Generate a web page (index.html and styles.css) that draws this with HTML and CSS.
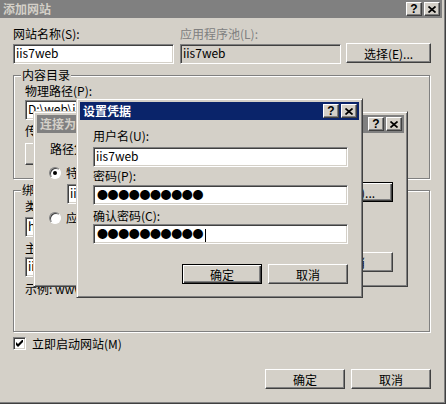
FILE: index.html
```html
<!DOCTYPE html>
<html lang="zh-CN">
<head>
    <meta charset="UTF-8">
    <title>添加网站</title>
    <link rel="stylesheet" href="styles.css">
</head>
<body>
    <div class="window main-win">
        <div class="titlebar">
            <span class="title">添加网站</span>
            <span class="title-btns">
                <span class="title-btn">?</span>
                <span class="title-btn"><svg width="8" height="7" viewBox="0 0 8 7"><path d="M0.5 0.5L7.5 6.5M7.5 0.5L0.5 6.5" stroke="#000" stroke-width="1.7"/></svg></span>
            </span>
        </div>
        <div class="main-body">
            <div class="site-grid">
                <div class="lbl">网站名称(S):</div>
                <div class="lbl disabled">应用程序池(L):</div>
                <div></div>
                <div class="field">iis7web</div>
                <div class="field readonly">iis7web</div>
                <button class="btn select-btn">选择(E)...</button>
            </div>
            <fieldset class="group dir-group">
                <legend>内容目录</legend>
                <div class="lbl">物理路径(P):</div>
                <div class="path-row">
                    <div class="field path-field">D:\web\iis7web</div>
                    <button class="btn browse-btn">...</button>
                </div>
                <div class="lbl pass-lbl">传递身份验证</div>
                <div class="auth-btns">
                    <button class="btn tall">连接为(C)...</button>
                    <button class="btn tall">测试设置(G)...</button>
                </div>
            </fieldset>
            <fieldset class="group bind-group">
                <legend>绑定</legend>
                <div class="bind-grid">
                    <div class="lbl">类型(T):</div>
                    <div class="lbl">IP 地址(I):</div>
                    <div class="lbl">端口(O):</div>
                    <div class="field">http</div>
                    <div class="field">全部未分配</div>
                    <div class="field">80</div>
                </div>
                <div class="lbl host-lbl">主机名(H):</div>
                <div class="field host-field">iis7web</div>
                <div class="lbl example">示例: www.contoso.com 或 marketing.contoso.com</div>
            </fieldset>
            <label class="check-row">
                <span class="checkbox"><svg width="7" height="7" viewBox="0 0 7 7"><path d="M0 2L2 4L7 -1V2L2 7L0 5Z" fill="#000"/></svg></span>
                立即启动网站(M)
            </label>
            <div class="btn-row main-btns">
                <button class="btn">确定</button>
                <button class="btn">取消</button>
            </div>
        </div>
    </div>

    <div class="window connect-win">
        <div class="titlebar">
            <span class="title">连接为</span>
            <span class="title-btns">
                <span class="title-btn">?</span>
                <span class="title-btn"><svg width="8" height="7" viewBox="0 0 8 7"><path d="M0.5 0.5L7.5 6.5M7.5 0.5L0.5 6.5" stroke="#000" stroke-width="1.7"/></svg></span>
            </span>
        </div>
        <div class="connect-body">
            <div class="lbl">路径凭据:</div>
            <label class="radio-row first"><span class="radio checked"></span>特定用户(S):</label>
            <div class="user-row">
                <div class="field user-field">iis7web</div>
                <button class="btn default set-btn">设置(E)...</button>
            </div>
            <label class="radio-row second"><span class="radio"></span>应用程序用户(通过身份验证)(A)</label>
            <div class="btn-row connect-btns">
                <button class="btn">确定</button>
                <button class="btn">取消</button>
            </div>
        </div>
    </div>

    <div class="window creds-win">
        <div class="titlebar active">
            <span class="title">设置凭据</span>
            <span class="title-btns">
                <span class="title-btn">?</span>
                <span class="title-btn"><svg width="8" height="7" viewBox="0 0 8 7"><path d="M0.5 0.5L7.5 6.5M7.5 0.5L0.5 6.5" stroke="#000" stroke-width="1.7"/></svg></span>
            </span>
        </div>
        <div class="creds-body">
            <div class="lbl">用户名(U):</div>
            <div class="field wide user-name">iis7web</div>
            <div class="lbl pw-lbl">密码(P):</div>
            <div class="field wide dots">●●●●●●●●●●</div>
            <div class="lbl confirm-lbl">确认密码(C):</div>
            <div class="field wide dots confirm">●●●●●●●●●●<span class="caret"></span></div>
            <div class="btn-row creds-btns">
                <button class="btn default">确定</button>
                <button class="btn">取消</button>
            </div>
        </div>
    </div>
</body>
</html>
```

FILE: styles.css
```css
* {
    box-sizing: border-box;
}
body {
    margin: 0;
    width: 447px;
    height: 404px;
    overflow: hidden;
    position: relative;
    background: #fff;
    font-family: "Noto Sans CJK SC", "Liberation Sans", sans-serif;
    font-size: 12px;
    color: #000;
}

/* windows */
.window {
    position: absolute;
    display: flex;
    flex-direction: column;
    padding: 3px;
    background: #d4d0c8;
    border: 1px solid;
    border-color: #d4d0c8 #404040 #404040 #d4d0c8;
    box-shadow: inset 1px 1px #fff, inset -1px -1px #808080;
}
.main-win { left: -4px; top: -4px; width: 450px; height: 408px; }
.connect-win { left: 33px; top: 111px; width: 375px; height: 176px; }
.creds-win { left: 76px; top: 98px; width: 287px; height: 200px; }

.titlebar {
    display: flex;
    align-items: center;
    height: 18px;
    padding-left: 3px;
    background: #808080;
    color: #d4d0c8;
    font-weight: bold;
    line-height: 18px;
}
.titlebar.active {
    background: #0a246a;
    color: #fff;
}
.title-btns {
    display: flex;
    gap: 2px;
    margin-left: auto;
    margin-right: 2px;
}
.title-btn {
    display: flex;
    align-items: center;
    justify-content: center;
    width: 16px;
    height: 14px;
    background: #d4d0c8;
    border: 1px solid;
    border-color: #fff #404040 #404040 #fff;
    box-shadow: inset -1px -1px #808080;
    color: #000;
    font-family: "Liberation Sans", sans-serif;
    font-size: 12px;
    font-weight: bold;
    line-height: 12px;
}

/* controls */
.lbl {
    line-height: 14px;
    height: 14px;
    white-space: nowrap;
}
.lbl.disabled { color: #808080; }
.field {
    height: 20px;
    padding: 0 2px;
    line-height: 16px;
    background: #fff;
    border: 1px solid;
    border-color: #808080 #fff #fff #808080;
    box-shadow: inset 1px 1px #404040, inset -1px -1px #d4d0c8;
    white-space: nowrap;
    overflow: hidden;
}
.field.readonly { background: #d4d0c8; }
.btn {
    height: 20px;
    padding: 0;
    font: inherit;
    color: #000;
    background: #d4d0c8;
    border: 1px solid;
    border-color: #fff #404040 #404040 #fff;
    box-shadow: inset -1px -1px #808080;
    white-space: nowrap;
}
.btn.default {
    border-color: #000;
    box-shadow: inset 1px 1px #fff, inset -1px -1px #404040, inset -2px -2px #808080;
}
.btn.tall { height: 22px; }
.btn-row {
    display: flex;
    justify-content: flex-end;
    gap: 6px;
}
.btn-row .btn { width: 80px; }

/* main window */
.main-body {
    padding: 9px 12px 0 13px;
}
.site-grid {
    display: grid;
    grid-template-columns: 162px 161px 85px;
    column-gap: 5px;
    row-gap: 3px;
}
.site-grid .field { width: 161px; }
.select-btn { margin-top: -1px; }

.group {
    margin: 4px 0 0;
    padding: 2px 11px 0;
    min-width: 0;
    border: 1px solid #808080;
    box-shadow: inset 1px 1px #fff, 1px 1px #fff;
}
.group legend {
    margin-left: -4px;
    padding: 0 1px;
    line-height: 14px;
    background: #d4d0c8;
}
.dir-group { height: 111px; }
.bind-group { height: 149px; }

.path-row {
    display: flex;
    gap: 6px;
    margin-top: 2px;
}
.path-field { width: 300px; }
.browse-btn { width: 26px; }
.pass-lbl { margin-top: 4px; }
.auth-btns {
    display: flex;
    gap: 6px;
    margin-top: 5px;
}
.auth-btns .btn { width: 100px; }

.bind-grid {
    display: grid;
    grid-template-columns: 90px 150px 60px;
    column-gap: 8px;
    row-gap: 4px;
}
.host-lbl { margin-top: 4px; }
.host-field { width: 300px; margin-top: 2px; }
.example { margin-top: 5px; }

.check-row {
    display: flex;
    align-items: center;
    gap: 6px;
    height: 13px;
    margin-top: 5px;
    line-height: 13px;
}
.checkbox {
    display: flex;
    align-items: center;
    justify-content: center;
    width: 13px;
    height: 13px;
    background: #fff;
    border: 1px solid;
    border-color: #808080 #fff #fff #808080;
    box-shadow: inset 1px 1px #404040, inset -1px -1px #d4d0c8;
}
.main-btns {
    margin-top: 19px;
    margin-right: -1px;
}

/* connect-as dialog */
.connect-body {
    padding: 9px 11px 0 13px;
}
.radio-row {
    display: flex;
    align-items: center;
    gap: 5px;
    height: 14px;
    line-height: 14px;
    margin-left: -1px;
    white-space: nowrap;
}
.radio-row.first { margin-top: 10px; }
.radio-row.second { margin-top: 7px; }
.radio {
    position: relative;
    flex: none;
    width: 12px;
    height: 12px;
    border-radius: 50%;
    background: #fff;
    border: 1px solid;
    border-color: #808080 #fff #fff #808080;
    box-shadow: inset 1px 1px #404040;
}
.radio.checked::after {
    content: "";
    position: absolute;
    left: 3px;
    top: 3px;
    width: 4px;
    height: 4px;
    border-radius: 50%;
    background: #000;
}
.user-row {
    display: flex;
    align-items: flex-start;
    margin-top: 2px;
}
.user-field {
    width: 230px;
    margin-left: 17px;
    margin-top: 2px;
}
.set-btn {
    width: 85px;
    margin-left: auto;
}
.connect-btns { margin-top: 27px; }

/* credentials dialog */
.creds-body {
    padding: 9px 11px 0 13px;
}
.field.wide { width: 255px; }
.user-name { margin-top: 4px; }
.pw-lbl { margin-top: 2px; }
.dots {
    margin-top: 2px;
    padding-left: 3px;
    font-size: 11px;
    letter-spacing: -0.4px;
}
.confirm-lbl { margin-top: 4px; }
.dots.confirm { margin-top: 1px; }
.caret {
    display: inline-block;
    width: 1px;
    height: 13px;
    margin-left: 2px;
    vertical-align: middle;
    background: #000;
}
.creds-btns {
    margin-top: 20px;
}
```
